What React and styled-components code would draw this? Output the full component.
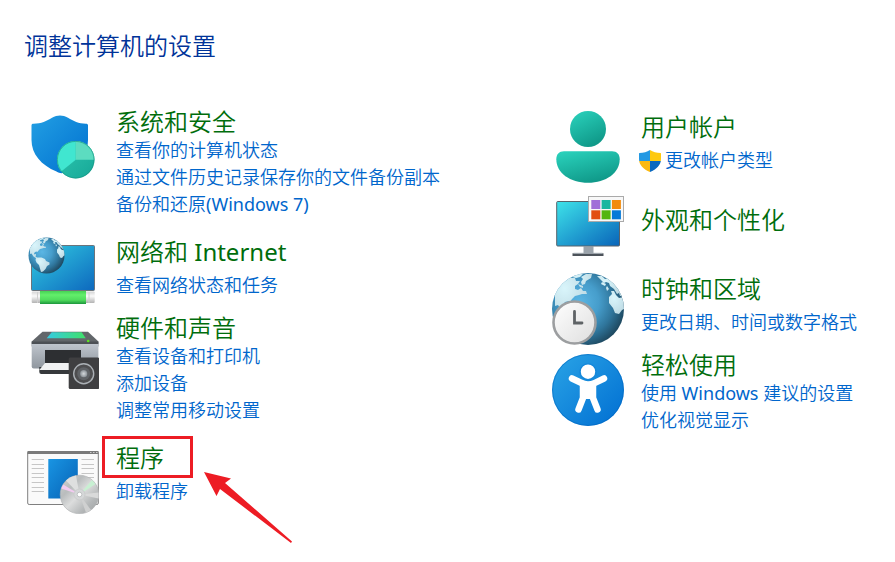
import styled, { createGlobalStyle } from "styled-components";

const GlobalStyle = createGlobalStyle`
  * {
    box-sizing: border-box;
  }
  body {
    margin: 0;
    background: #fff;
    font-family: "Noto Sans", "Noto Sans CJK SC", sans-serif;
    font-weight: 350;
  }
`;

const Page = styled.main`
  min-height: 100vh;
  padding: 31px 20px 16px 27px;
`;

const Title = styled.h1`
  margin: 0 0 46px -3px;
  font-size: 24px;
  line-height: 30px;
  font-weight: inherit;
  color: #003399;
`;

const Columns = styled.div`
  display: grid;
  grid-template-columns: 13fr 8fr;
  align-items: start;
`;

const Column = styled.div`
  display: flex;
  flex-direction: column;
  gap: 5px;
`;

const StyledCategory = styled.section`
  display: flex;
  align-items: flex-start;
  gap: 17px;
  padding-bottom: ${(props) => (props.$tall ? "9px" : "0")};
`;

const Icon = styled.svg`
  flex: none;
  width: 72px;
  height: 72px;
  margin-top: 4px;
`;

const spacing = { none: "17px", one: "5px", many: "0" };

const Details = styled.div`
  display: flex;
  flex-direction: column;
  align-items: flex-start;
  gap: ${(props) => (props.$size === "one" ? "5px" : "0")};
  padding-top: ${(props) => spacing[props.$size]};
  white-space: nowrap;
`;

const Heading = styled.h2`
  position: relative;
  margin: 0;
  font-size: 24px;
  line-height: 30px;
  font-weight: inherit;
`;

const HeadingLink = styled.a`
  color: #006d0c;
  text-decoration: none;
`;

const Links = styled.ul`
  margin: 0;
  padding: 0;
  list-style: none;
`;

const TaskLink = styled.a`
  display: flex;
  align-items: center;
  gap: 4px;
  margin-left: ${(props) => (props.$admin ? "-2px" : "0")};
  font-size: 18px;
  line-height: 27px;
  color: #0066cc;
  text-decoration: none;
`;

const Latin = styled.span`
  font-weight: 400;
`;

const Highlight = styled.span`
  position: absolute;
  top: -7px;
  left: -14px;
  width: 91px;
  height: 42px;
  border: 3px solid #ed1c24;
  pointer-events: none;
`;

const Arrow = styled.svg`
  position: absolute;
  top: 28px;
  left: 87px;
  width: 90px;
  height: 74px;
  pointer-events: none;
`;

function Globe({ id }) {
  return (
    <>
      <defs>
        <radialGradient id={`${id}-sea`} cx=".38" cy=".4" r=".68">
          <stop offset="0" stopColor="#5bb6e4" />
          <stop offset=".4" stopColor="#469dcb" />
          <stop offset=".7" stopColor="#2f759b" />
          <stop offset="1" stopColor="#1b4156" />
        </radialGradient>
        <radialGradient id={`${id}-land`} cx=".3" cy=".3" r=".9">
          <stop offset="0" stopColor="#d9f5fb" />
          <stop offset="1" stopColor="#b9d5df" />
        </radialGradient>
        <clipPath id={`${id}-clip`}>
          <circle cx="36" cy="36" r="36" />
        </clipPath>
      </defs>
      <circle cx="36" cy="36" r="36" fill={`url(#${id}-sea)`} />
      <g clipPath={`url(#${id}-clip)`} fill={`url(#${id}-land)`}>
        <path d="M3 19L10 9l6-5 4 1 3 0 1 3 4 0-2 3-3 2 0 3 3 1 3-2 2 3 3 0 1 3-5 0-3 1-4 1-3 3-2 3-1-1-4 1-2 3 1 2 3-1 0 2-1 3 5 3-3 1-6-4-4-6-3 1z" />
        <path d="M20 4l5-3 6 0-3 3-4 1zM29 4l5-3 6 0-1 4-5 3-1 3-3 1-1-3 2-3zM26 11l5 2 0 2-3-1z" />
        <path d="M15 41l5-1 6 0 7 3 2 4 7 3 0 4-5 3-3 6-5 5-4 1-2-7-2-7-5-5-2-5z" />
        <path d="M45 3l5 0 3 3 3-1 3 1 6 5 4 8 2 4-3 0-1-3-2 1-3-5-4-3-1-3-3-1-2 1-3-3zM50 9l4 2-1 2-4-2zM55 13l2 3-2 2-1-3z" />
        <path d="M59 18l3 0 2 4 3 3 5-1 2 11-4 2-3 4-4-1-2-5-4-5 0-6 3-3z" />
      </g>
    </>
  );
}

function SecurityIcon() {
  return (
    <Icon viewBox="0 0 72 72" aria-hidden="true">
      <defs>
        <linearGradient id="shield" x1="0" y1="0" x2="1" y2="1">
          <stop offset="0" stopColor="#229fe3" />
          <stop offset="1" stopColor="#006fcf" />
        </linearGradient>
        <linearGradient id="pie" x1="0" y1="0" x2="1" y2="1">
          <stop offset="0" stopColor="#30c9b1" />
          <stop offset="1" stopColor="#16a797" />
        </linearGradient>
      </defs>
      <path
        d="M4.5 14.5c0-1.2.6-1.7 2-1.7 8-.2 13-2.6 18.5-6 5.5-3 10.5-3 16 0 5.5 3.4 10.5 5.8 18 6 1.4 0 2 .5 2 1.7V29c0 13.5-8 25-22 31.8-3.5 1.8-6 1.8-9.5-.2C14 54 4.5 43 4.5 29z"
        fill="url(#shield)"
      />
      <circle cx="48.7" cy="48.7" r="18.8" fill="url(#pie)" />
      <path d="M48.7 48.7V30a18.7 18.7 0 0 0-14.5 30.5z" fill="#40e6d0" />
      <path d="M48.7 48.7V30a18.7 18.7 0 0 1 18.7 18.7z" fill="#5cdcc0" />
      <circle cx="48.7" cy="48.7" r="18.3" fill="none" stroke="#18927f" strokeWidth="1" opacity=".6" />
    </Icon>
  );
}

function NetworkIcon() {
  return (
    <Icon viewBox="0 0 72 72" aria-hidden="true">
      <defs>
        <linearGradient id="net-screen" x1="0" y1="0" x2="1" y2="1">
          <stop offset="0" stopColor="#32cde2" />
          <stop offset="1" stopColor="#0d68be" />
        </linearGradient>
        <linearGradient id="cable" x1="0" y1="0" x2="0" y2="1">
          <stop offset="0" stopColor="#45d254" />
          <stop offset=".3" stopColor="#63ee6b" />
          <stop offset=".7" stopColor="#4fdb5c" />
          <stop offset="1" stopColor="#1c963c" />
        </linearGradient>
        <linearGradient id="cable-end" x1="0" y1="0" x2="0" y2="1">
          <stop offset="0" stopColor="#d5d5d5" />
          <stop offset=".4" stopColor="#fafafa" />
          <stop offset="1" stopColor="#b3b3b3" />
        </linearGradient>
      </defs>
      <rect x="4.5" y="9.5" width="63" height="45" rx="1" fill="url(#net-screen)" stroke="#6b747b" />
      <rect x="4.7" y="55.5" width="63" height="11.5" rx="1" fill="url(#cable-end)" />
      <path d="M10.5 56v11M62 56v11" stroke="#d0d0d0" />
      <rect x="13" y="55" width="46" height="13" fill="url(#cable)" />
      <g transform="translate(1.5 1.5) scale(.5)">
        <Globe id="net-globe" />
      </g>
    </Icon>
  );
}

function HardwareIcon() {
  return (
    <Icon viewBox="0 0 72 72" aria-hidden="true">
      <defs>
        <linearGradient id="printer" x1="0" y1="0" x2="0" y2="1">
          <stop offset="0" stopColor="#c3c9d1" />
          <stop offset="1" stopColor="#8f969e" />
        </linearGradient>
        <linearGradient id="scanner">
          <stop offset="0" stopColor="#35cbe2" />
          <stop offset="1" stopColor="#3fe069" />
        </linearGradient>
        <radialGradient id="cone">
          <stop offset="0" stopColor="#d5d9dc" />
          <stop offset="1" stopColor="#8a9096" />
        </radialGradient>
      </defs>
      <path d="M15.5 14.7h45.5l10.4 9.8v5H4.7v-5z" fill="#62666a" />
      <path d="M4.7 25h66.7v24.5q0 2-2 2H6.7q-2 0-2-2z" fill="url(#printer)" />
      <path d="M4.7 24.5h66.7v2.5H4.7z" fill="#4c5055" />
      <path d="M24.7 15.3h30l4 6h-39z" fill="url(#scanner)" />
      <circle cx="61.2" cy="24" r="1.3" fill="#5be51e" />
      <path d="M18 33h36v14H18z" fill="#2d2f32" />
      <path d="M12.3 50h32v7H14.3q-2 0-2-2z" fill="#36393c" />
      <path d="M18 46h32v7H12.3z" fill="#f0f1f2" />
      <rect x="41.7" y="40.5" width="30.5" height="31.5" rx="1.5" fill="#3f3f41" />
      <circle cx="56.7" cy="56.7" r="10" fill="#4e4e50" stroke="#abb0b5" strokeWidth="1.4" />
      <circle cx="56.7" cy="56.7" r="6.5" fill="#606367" />
      <circle cx="56.7" cy="56.7" r="3.6" fill="url(#cone)" />
    </Icon>
  );
}

function ProgramsIcon() {
  const lines = [17.5, 22.5, 26.5, 31.5, 35.5, 40.5, 45.5, 49.5];

  return (
    <Icon viewBox="0 0 72 72" aria-hidden="true">
      <defs>
        <linearGradient id="app" x1="0" y1="0" x2="1" y2="1">
          <stop offset="0" stopColor="#1995e3" />
          <stop offset="1" stopColor="#0661b5" />
        </linearGradient>
        <linearGradient id="disc" x1="0" y1="0" x2="1" y2="1">
          <stop offset="0" stopColor="#d2d4d4" />
          <stop offset=".3" stopColor="#b9bcbd" />
          <stop offset=".5" stopColor="#dcdddd" />
          <stop offset=".75" stopColor="#b4b7b8" />
          <stop offset="1" stopColor="#9c9fa0" />
        </linearGradient>
      </defs>
      <rect x=".7" y="9.5" width="70.6" height="53" rx="1.5" fill="#fafafa" stroke="#7f7f7f" />
      <path d="M.5 9h71v3H.5z" fill="#7a7a7a" />
      <path d="M63 10.5h1.5M66 10.5h1.5M69 10.5h1.5" stroke="#ccc" />
      {lines.map((y) => (
        <path key={y} d={`M4.7 ${y}H17M54.5 ${y}H67`} stroke="#c6c6c6" />
      ))}
      <path d="M21.3 17h29.5v39.5H21.3z" fill="url(#app)" />
      <circle cx="52.5" cy="52.5" r="19.3" fill="url(#disc)" stroke="#aeb0b1" strokeWidth=".6" />
      <path d="M52.5 52.5L39 38.5a19.3 19.3 0 0 1 10-5z" fill="#dedfdf" />
      <path d="M52.5 52.5l-18.3-6 2-4z" fill="#f2cbf0" />
      <path d="M52.5 52.5L65 38l3.5 4z" fill="#c8f0d2" />
      <path d="M52.5 52.5l19-2v6z" fill="#d9dada" />
      <path d="M52.5 52.5L64 68l-5 2.7z" fill="#cfd0d0" />
      <circle cx="52.5" cy="52.5" r="5.5" fill="#d5d7d8" stroke="#c2c4c5" strokeWidth=".6" />
      <circle cx="52.5" cy="52.5" r="2.3" fill="#fff" stroke="#b0b3b4" strokeWidth=".7" />
    </Icon>
  );
}

function AccountIcon() {
  return (
    <Icon viewBox="0 0 72 72" aria-hidden="true">
      <defs>
        <linearGradient id="person" x1="0" y1="0" x2=".5" y2="1">
          <stop offset="0" stopColor="#2bd4be" />
          <stop offset="1" stopColor="#109a8a" />
        </linearGradient>
      </defs>
      <circle cx="36" cy="18" r="18" fill="url(#person)" />
      <path
        d="M12 40.3h48c5 0 7.7 3 7.7 8C67.7 62 54 71.8 36 71.8S4.3 62 4.3 48.3c0-5 2.7-8 7.7-8z"
        fill="url(#person)"
      />
    </Icon>
  );
}

function AppearanceIcon() {
  const tiles = ["#a06fd8", "#18b6a0", "#f28b0c", "#e24d12", "#55b511", "#0579d8"];

  return (
    <Icon viewBox="0 0 72 72" aria-hidden="true">
      <defs>
        <linearGradient id="desktop" x1="0" y1="0" x2="1" y2="1">
          <stop offset="0" stopColor="#3ee3e9" />
          <stop offset=".5" stopColor="#22a2d2" />
          <stop offset="1" stopColor="#0964b9" />
        </linearGradient>
      </defs>
      <path d="M31.5 54.5h10V62h-10z" fill="#9ba3ab" />
      <path d="M20.5 61.3h31V64h-31z" fill="#4c535a" />
      <path d="M21.5 60.8h29v1h-29z" fill="#a5adb4" />
      <rect x="4.7" y="9.5" width="62.8" height="44.5" rx="1" fill="url(#desktop)" stroke="#59636b" />
      <rect x="36.5" y="4.5" width="35" height="25" fill="#f8f8f8" stroke="#aaa" />
      {tiles.map((color, i) => (
        <rect
          key={color}
          x={39.3 + (i % 3) * 10.3}
          y={8 + Math.floor(i / 3) * 10.3}
          width="9"
          height="9"
          fill={color}
        />
      ))}
    </Icon>
  );
}

function RegionIcon() {
  return (
    <Icon viewBox="0 0 72 72" aria-hidden="true">
      <defs>
        <linearGradient id="clock" x1="0" y1="0" x2="1" y2="1">
          <stop offset="0" stopColor="#fff" />
          <stop offset="1" stopColor="#dedede" />
        </linearGradient>
      </defs>
      <Globe id="region-globe" />
      <circle cx="22.5" cy="49.5" r="21" fill="url(#clock)" stroke="#9c9ea0" strokeWidth="2.6" />
      <path d="M22.5 38.5V50H30" fill="none" stroke="#5f6366" strokeWidth="2.8" strokeLinecap="round" />
    </Icon>
  );
}

function AccessIcon() {
  return (
    <Icon viewBox="0 0 72 72" aria-hidden="true">
      <defs>
        <linearGradient id="access" x1="0" y1="0" x2="1" y2="1">
          <stop offset="0" stopColor="#2aa4e6" />
          <stop offset="1" stopColor="#006ed2" />
        </linearGradient>
      </defs>
      <circle cx="36" cy="36" r="36" fill="url(#access)" />
      <circle cx="36" cy="36" r="35.4" fill="none" stroke="#0063bb" strokeWidth="1" opacity=".5" />
      <path
        d="M20 24.5l9 4.3c4.5 2.2 9.5 2.2 14 0l9-4.3"
        fill="none"
        stroke="#fff"
        strokeWidth="6.5"
        strokeLinecap="round"
      />
      <path
        d="M31 31v13l-4.5 11.5M41 31v13l4.5 11.5"
        fill="none"
        stroke="#fff"
        strokeWidth="6.5"
        strokeLinecap="round"
        strokeLinejoin="round"
      />
      <path d="M28 28h16v17H28z" fill="#fff" />
      <circle cx="36" cy="17.7" r="8" fill="#fff" stroke="#1488da" strokeWidth="1.6" />
    </Icon>
  );
}

function AdminShield() {
  return (
    <svg width="22" height="22" viewBox="0 0 22 22" aria-hidden="true">
      <defs>
        <clipPath id="admin-clip">
          <path d="M11 0c3 2 6.5 3 10.5 3 .3 0 .5.2.5.5V9c0 6-4.5 10.5-11 13C4.5 19.5 0 15 0 9V3.5C0 3.2.2 3 .5 3 4.5 3 8 2 11 0z" />
        </clipPath>
      </defs>
      <g clipPath="url(#admin-clip)">
        <path d="M0 0h11v11H0z" fill="#2499e3" />
        <path d="M11 0h11v11H11z" fill="#fec90f" />
        <path d="M0 11h11v11H0z" fill="#fbb911" />
        <path d="M11 11h11v11H11z" fill="#0a68bf" />
      </g>
    </svg>
  );
}

const leftCategories = [
  {
    title: "系统和安全",
    icon: SecurityIcon,
    links: ["查看你的计算机状态", "通过文件历史记录保存你的文件备份副本", "备份和还原(Windows 7)"],
  },
  { title: "网络和 Internet", icon: NetworkIcon, links: ["查看网络状态和任务"] },
  {
    title: "硬件和声音",
    icon: HardwareIcon,
    links: ["查看设备和打印机", "添加设备", "调整常用移动设置"],
  },
  { title: "程序", icon: ProgramsIcon, links: ["卸载程序"], highlighted: true },
];

const rightCategories = [
  { title: "用户帐户", icon: AccountIcon, links: ["更改帐户类型"], admin: true },
  { title: "外观和个性化", icon: AppearanceIcon, links: [] },
  { title: "时钟和区域", icon: RegionIcon, links: ["更改日期、时间或数字格式"] },
  {
    title: "轻松使用",
    icon: AccessIcon,
    links: ["使用 Windows 建议的设置", "优化视觉显示"],
  },
];

function getSize(links) {
  if (links.length === 0) return "none";
  return links.length === 1 ? "one" : "many";
}

// Latin words get the regular weight, the Chinese text stays lighter
function Label({ text }) {
  return (
    <span>
      {text
        .split(/([ -~]+)/)
        .map((part, i) => (i % 2 ? <Latin key={i}>{part}</Latin> : part))}
    </span>
  );
}

function Category({ title, icon: CategoryIcon, links, highlighted, admin }) {
  return (
    <StyledCategory $tall={links.length > 2}>
      <CategoryIcon />
      <Details $size={getSize(links)}>
        <Heading>
          <HeadingLink href="#">
            <Label text={title} />
          </HeadingLink>
          {highlighted && (
            <>
              <Highlight />
              <Arrow viewBox="0 0 90 74" aria-hidden="true">
                <path d="M1 1L28 7.5 22 12 89 70.5 88 72 17 18 13.5 25z" fill="#ed1c24" />
              </Arrow>
            </>
          )}
        </Heading>
        {links.length > 0 && (
          <Links>
            {links.map((link) => (
              <li key={link}>
                <TaskLink href="#" $admin={admin}>
                  {admin && <AdminShield />}
                  <Label text={link} />
                </TaskLink>
              </li>
            ))}
          </Links>
        )}
      </Details>
    </StyledCategory>
  );
}

function App() {
  return (
    <>
      <GlobalStyle />
      <Page>
        <Title>调整计算机的设置</Title>
        <Columns>
          <Column>
            {leftCategories.map((category) => (
              <Category key={category.title} {...category} />
            ))}
          </Column>
          <Column>
            {rightCategories.map((category) => (
              <Category key={category.title} {...category} />
            ))}
          </Column>
        </Columns>
      </Page>
    </>
  );
}

export default App;
